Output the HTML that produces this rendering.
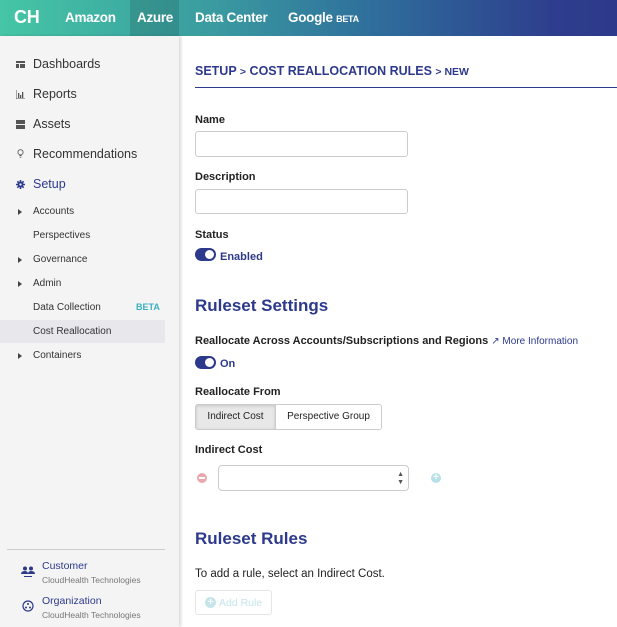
<!DOCTYPE html>
<html><head><meta charset="utf-8"><style>
*{box-sizing:border-box;margin:0;padding:0}
body{width:617px;height:627px;overflow:hidden;font-family:"Liberation Sans",sans-serif;background:#fff;position:relative;color:#222}
.top{position:absolute;left:0;top:0;width:617px;height:36px;background:linear-gradient(90deg,#45c6a5 0%,#3a9aa0 35%,#2f6f9c 60%,#2e3d8d 90%,#2d3a8c 100%);color:#fff;font-weight:bold}
.top span{position:absolute;top:10px;font-size:13.5px;letter-spacing:-0.3px}
.az{position:absolute;left:130px;top:0;width:49px;height:36px;background:rgba(0,0,0,0.12)}
.side{position:absolute;left:0;top:36px;width:179px;height:591px;background:#f4f4f4;box-shadow:2px 0 3px rgba(0,0,0,0.15)}
.ni{position:absolute;left:33px;font-size:12.5px;color:#333}
.ic{position:absolute;left:16px;width:9px;height:9px}
.sub{position:absolute;left:33px;font-size:10px;color:#333}
.tri{position:absolute;left:18px;width:0;height:0;border-left:4px solid #444;border-top:3px solid transparent;border-bottom:3px solid transparent}
.main{position:absolute;left:195px}
h1{font-size:12.5px;color:#2d3a8c;font-weight:bold}
.lbl{position:absolute;left:195px;font-size:11px;font-weight:bold;color:#222}
.inp{position:absolute;left:195px;width:213px;height:26px;border:1px solid #ccc;border-radius:3px;background:#fff}
.tog{position:absolute;left:195px;width:21px;height:13px;border-radius:7px;background:#2d3a8c}
.tog:after{content:"";position:absolute;right:2px;top:2px;width:9px;height:9px;border-radius:50%;background:#fff}
.tl{position:absolute;left:220px;font-size:11px;font-weight:bold;color:#2d3a8c}
h2{position:absolute;left:195px;font-size:17px;color:#2d3a8c;font-weight:bold}
</style></head><body>
<div class="top">
<div class="az"></div>
<span style="left:14px;top:7px;font-size:18px">CH</span>
<span style="left:65px">Amazon</span>
<span style="left:137px">Azure</span>
<span style="left:195px">Data Center</span>
<span style="left:288px">Google <b style="font-size:9px">BETA</b></span>
</div>
<div class="side">
<svg class="ic" style="top:24px" viewBox="0 0 9 9"><rect x="0" y="1" width="9" height="7" fill="#555"/><rect x="3" y="3" width="1" height="5" fill="#f4f4f4"/><rect x="0" y="3" width="9" height="1" fill="#f4f4f4"/></svg>
<div class="ni" style="top:21px">Dashboards</div>
<svg class="ic" style="top:54px" viewBox="0 0 9 9"><path d="M0 0v9h9" stroke="#555" fill="none"/><rect x="2" y="3" width="1.3" height="5" fill="#555"/><rect x="4" y="5" width="1.3" height="3" fill="#555"/><rect x="6" y="2" width="1.3" height="6" fill="#555"/></svg>
<div class="ni" style="top:51px">Reports</div>
<svg class="ic" style="top:84px" viewBox="0 0 9 9"><rect x="0" y="0" width="9" height="4" fill="#555"/><rect x="0" y="5" width="9" height="4" fill="#555"/></svg>
<div class="ni" style="top:81px">Assets</div>
<svg class="ic" style="top:113px" viewBox="0 0 9 11"><circle cx="4.5" cy="4" r="3.2" stroke="#555" fill="none"/><path d="M3 8h3M3.5 10h2" stroke="#555"/></svg>
<div class="ni" style="top:111px">Recommendations</div>
<svg class="ic" style="top:144px" viewBox="0 0 10 10"><circle cx="5" cy="5" r="3.3" fill="#2d3a8c"/><path d="M5 0v10M0 5h10M1.5 1.5l7 7M8.5 1.5l-7 7" stroke="#2d3a8c" stroke-width="1.8"/><circle cx="5" cy="5" r="1.3" fill="#f4f4f4"/></svg>
<div class="ni" style="top:141px;color:#2d3a8c">Setup</div>
<div class="tri" style="top:173px"></div><div class="sub" style="top:170px">Accounts</div>
<div class="sub" style="top:194px">Perspectives</div>
<div class="tri" style="top:221px"></div><div class="sub" style="top:218px">Governance</div>
<div class="tri" style="top:245px"></div><div class="sub" style="top:242px">Admin</div>
<div class="sub" style="top:266px">Data Collection</div>
<div class="sub" style="top:266px;left:136px;color:#3ab0c0;font-weight:bold;font-size:9px">BETA</div>
<div style="position:absolute;left:0;top:284px;width:165px;height:23px;background:#e8e8ec"></div>
<div class="sub" style="top:290px">Cost Reallocation</div>
<div class="tri" style="top:317px"></div><div class="sub" style="top:314px">Containers</div>
<div style="position:absolute;left:7px;top:513px;width:158px;border-top:1px solid #ccc"></div>
<svg style="position:absolute;left:21px;top:530px" width="14" height="12" viewBox="0 0 14 12"><circle cx="4" cy="2.5" r="2" fill="#2d3a8c"/><circle cx="10" cy="2.5" r="2" fill="#2d3a8c"/><path d="M0 8q0-3 4-3 3 0 3 3zM7 8q0-3 3-3 4 0 4 3z" fill="#2d3a8c"/><path d="M3 10.5h8" stroke="#2d3a8c"/></svg>
<div style="position:absolute;left:42px;top:524px;font-size:10.5px;color:#2d3a8c">Customer</div>
<div style="position:absolute;left:42px;top:539px;font-size:8.5px;color:#777">CloudHealth Technologies</div>
<svg style="position:absolute;left:22px;top:564px" width="12" height="12" viewBox="0 0 12 12"><circle cx="6" cy="6" r="5" stroke="#2d3a8c" fill="none" stroke-width="1.2"/><circle cx="6" cy="4" r="1" fill="#2d3a8c"/><circle cx="4" cy="7.5" r="1" fill="#2d3a8c"/><circle cx="8" cy="7.5" r="1" fill="#2d3a8c"/></svg>
<div style="position:absolute;left:42px;top:559px;font-size:10.5px;color:#2d3a8c">Organization</div>
<div style="position:absolute;left:42px;top:574px;font-size:8.5px;color:#777">CloudHealth Technologies</div>
</div>
<div class="main" style="top:64px"><h1>SETUP <span style="font-size:10.5px">&gt;</span> COST REALLOCATION RULES <span style="font-size:10.5px">&gt; NEW</span></h1></div>
<div style="position:absolute;left:195px;top:87px;width:422px;border-top:1px solid #2d3a8c"></div>
<div class="lbl" style="top:114px">Name</div>
<div class="inp" style="top:131px"></div>
<div class="lbl" style="top:171px">Description</div>
<div class="inp" style="top:189px;height:25px"></div>
<div class="lbl" style="top:229px">Status</div>
<div class="tog" style="top:248px"></div><div class="tl" style="top:251px">Enabled</div>
<h2 style="top:296px">Ruleset Settings</h2>
<div class="lbl" style="top:335px">Reallocate Across Accounts/Subscriptions and Regions <span style="font-weight:normal;color:#2d3a8c;font-size:10px">&#x2197; More Information</span></div>
<div class="tog" style="top:356px"></div><div class="tl" style="top:358px">On</div>
<div class="lbl" style="top:386px">Reallocate From</div>
<div style="position:absolute;left:195px;top:404px;width:187px;height:26px;border:1px solid #ccc;border-radius:3px;font-size:10px;display:flex">
<div style="width:80px;background:#e8e8e8;border-right:1px solid #ccc;line-height:24px;text-align:center;box-shadow:inset 0 1px 3px rgba(0,0,0,0.15)">Indirect Cost</div>
<div style="flex:1;line-height:24px;text-align:center">Perspective Group</div></div>
<div class="lbl" style="top:444px">Indirect Cost</div>
<div style="position:absolute;left:197px;top:473px;width:10px;height:10px;border-radius:50%;background:#e8a8ad"><div style="position:absolute;left:2px;top:4px;width:6px;height:2px;background:#fff"></div></div>
<div style="position:absolute;left:218px;top:465px;width:191px;height:26px;border:1px solid #ccc;border-radius:4px;font-size:7px;color:#555;text-align:right;padding-right:4px;line-height:8px;padding-top:5px">▲<br>▼</div>
<div style="position:absolute;left:431px;top:473px;width:10px;height:10px;border-radius:50%;background:#b8e0ea;color:#fff;font-size:10px;line-height:10px;text-align:center;font-weight:bold">+</div>
<h2 style="top:529px">Ruleset Rules</h2>
<div style="position:absolute;left:195px;top:568px;font-size:11.5px">To add a rule, select an Indirect Cost.</div>
<div style="position:absolute;left:195px;top:590px;width:77px;height:25px;border:1px solid #e5e5e5;border-radius:3px;font-size:10.5px;color:#c5e5ea;display:flex;align-items:center;padding-left:9px;gap:3px"><span style="display:inline-block;width:11px;height:11px;border-radius:50%;background:#c5e5ea;color:#fff;text-align:center;line-height:11px;font-weight:bold;font-size:10px">+</span>Add Rule</div>
</body></html>
